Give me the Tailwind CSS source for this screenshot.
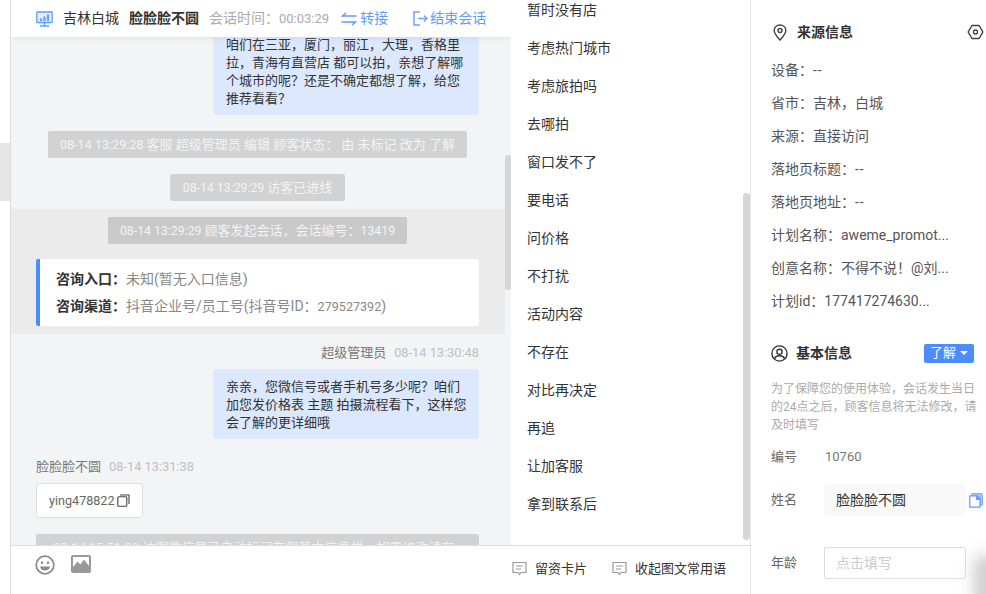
<!DOCTYPE html>
<html lang="zh">
<head>
  <meta charset="UTF-8">
  <title>会话</title>
  <script src="https://cdn.jsdelivr.net/npm/@tailwindcss/browser@4"></script>
</head>
<body class="overflow-hidden bg-white font-['Roboto','Noto_Sans_CJK_SC',sans-serif] text-[#333]">
  <div class="flex h-[594px] w-[986px] overflow-hidden">
    <!-- left sliver -->
    <div class="relative w-[11px] shrink-0 border-r border-[#ddd] bg-white">
      <div class="absolute left-0 top-[143px] h-[58px] w-[10px] bg-[#e6e6e6]"></div>
    </div>

    <!-- middle -->
    <div class="flex w-[740px] shrink-0 flex-col border-r border-[#e5e5e5]">
      <div class="flex h-[545px] min-h-0">
        <!-- chat -->
        <div class="relative w-[500px] shrink-0 overflow-hidden bg-[#f3f4f6]">
          <header class="relative z-10 flex h-[37px] items-center bg-white pl-[25px] text-[14px] shadow-[0_1px_6px_rgba(0,0,0,0.08)]">
            <svg class="mr-[10px] h-[16px] w-[17px]" viewBox="0 0 17 16" fill="none" stroke="#5f9bff" stroke-width="1.3">
              <rect x="0.8" y="1" width="15.4" height="10.5" rx="0.5" fill="#e6effe"/>
              <path d="M8.5 11.5V14.5M4 15H13" />
              <path d="M5 10V7.5M8.5 10V5.5M12 10V3.5" stroke-width="2.2"/>
            </svg>
            <span>吉林白城</span>
            <span class="ml-[10px] font-bold">脸脸脸不圆</span>
            <span class="ml-[10px] text-[#aaa]">会话时间：<span class="text-[13px]">00:03:29</span></span>
            <svg class="ml-[12px] h-[14px] w-[16px]" viewBox="0 0 16 14" fill="none" stroke="#5f9bff" stroke-width="1.4">
              <path d="M15.5 4H1.5L5 1M0.5 10H14.5L11 13"/>
            </svg>
            <span class="ml-[3px] text-[#5f9bff]">转接</span>
            <svg class="ml-[25px] h-[15px] w-[15px]" viewBox="0 0 15 15" fill="none" stroke="#6ea3ff" stroke-width="1.5">
              <path d="M7 1H1V14H7M5 7.5H14M11 4.5L14 7.5L11 10.5"/>
            </svg>
            <span class="ml-[2px] text-[#5f9bff]">结束会话</span>
          </header>

          <div class="absolute right-0 top-[155px] z-10 h-[135px] w-[6px] rounded bg-[#d6d6d6]"></div>

          <div class="pr-[6px] text-[13px] leading-[18px]">
            <div class="pl-[25px] pr-[26px]">
              <div class="-mt-[10px] ml-auto w-[266px] rounded-[4px] bg-[#dce8fe] pb-[7px] pl-[13px] pr-[12px] pt-[9px]">咱们在三亚，厦门，丽江，大理，香格里拉，青海有直营店 都可以拍，亲想了解哪个城市的呢？还是不确定都想了解，给您推荐看看？</div>
              <div class="mt-[16px] flex flex-col items-center gap-[16px]">
                <div class="flex h-[27px] w-[419px] items-center justify-center rounded-[2px] bg-[#d2d2d2] text-[#f3f3f3]"><span class="mr-[3px] text-[12.6px]">08-14 13:29:28</span>客服 超级管理员 编辑 顾客状态： 由 未标记 改为 了解</div>
                <div class="flex h-[27px] w-[175px] items-center justify-center rounded-[2px] bg-[#d2d2d2] text-[#f3f3f3]"><span class="mr-[3px] text-[12.3px]">08-14 13:29:29</span>访客已进线</div>
              </div>
            </div>

            <div class="mt-[8px] flex flex-col bg-[#ebebeb] pb-[8px] pl-[25px] pr-[26px] pt-[8px]">
              <div class="flex h-[27px] w-[299px] items-center justify-center self-center rounded-[2px] bg-[#c9c9c9] text-[#f3f3f3]"><span class="mr-[3px] text-[12.3px]">08-14 13:29:29</span>顾客发起会话，会话编号：<span class="text-[12.3px]">13419</span></div>
              <div class="mt-[15px] h-[67px] rounded-[2px] border-l-4 border-[#4d8cff] bg-white pl-[16px] pt-[7px] text-[14px] leading-[27px]">
                <div><span class="font-bold">咨询入口：</span><span class="text-[#888]">未知(暂无入口信息)</span></div>
                <div><span class="font-bold">咨询渠道：</span><span class="text-[#888]">抖音企业号/员工号(抖音号ID：<span class="text-[12.6px]">279527392</span>)</span></div>
              </div>
            </div>

            <div class="pl-[25px] pr-[26px]">
              <div class="mt-[10px] flex justify-end gap-[8px]">
                <span class="text-[#777]">超级管理员</span><span class="text-[12.8px] text-[#c0c0c0]">08-14 13:30:48</span>
              </div>
              <div class="mt-[7px] ml-auto w-[266px] rounded-[4px] bg-[#dce8fe] pb-[7px] pl-[13px] pr-[11px] pt-[9px]">亲亲，您微信号或者手机号多少呢？咱们加您发价格表 主题 拍摄流程看下，这样您会了解的更详细哦</div>
              <div class="mt-[19px] flex gap-[8px]">
                <span class="text-[#777]">脸脸脸不圆</span><span class="text-[12.8px] text-[#c0c0c0]">08-14 13:31:38</span>
              </div>
              <div class="mt-[7px] flex h-[35px] w-[107px] items-center rounded-[4px] border border-[#ddd] bg-white pl-[12px] text-[12.6px] text-[#666]">
                ying478822
                <svg class="ml-[2px] h-[13px] w-[13px]" viewBox="0 0 13 13" fill="none" stroke="#444" stroke-width="1.1">
                  <rect x="0.8" y="2.8" width="9" height="9.5" rx="1"/>
                  <path d="M3 1H12V10"/>
                </svg>
              </div>
              <div class="mt-[16px] rounded-[2px] bg-[#d2d2d2] px-[17px] py-[4.5px] text-[#f3f3f3]">08-14 15:51:00 访客微信号已自动标记在侧基本信息栏，如需修改请在基本信息栏修改</div>
            </div>
          </div>
        </div>

        <!-- quick replies -->
        <div class="relative flex-1 overflow-hidden bg-white pl-[16px] text-[14px] leading-[38px]">
          <div class="absolute right-0 top-[193px] h-[347px] w-[7px] rounded bg-[#d6d6d6]"></div>
          <ul class="-mt-[9px]">
            <li>暂时没有店</li>
            <li>考虑热门城市</li>
            <li>考虑旅拍吗</li>
            <li>去哪拍</li>
            <li>窗口发不了</li>
            <li>要电话</li>
            <li>问价格</li>
            <li>不打扰</li>
            <li>活动内容</li>
            <li>不存在</li>
            <li>对比再决定</li>
            <li>再追</li>
            <li>让加客服</li>
            <li>拿到联系后</li>
          </ul>
        </div>
      </div>

      <!-- toolbar -->
      <div class="flex h-[49px] items-start border-t border-[#ddd] bg-white pl-[24px] text-[13px]">
        <svg class="mt-[9px] h-[20px] w-[20px]" viewBox="0 0 20 20" fill="none" stroke="#888" stroke-width="1.7">
          <circle cx="10" cy="10" r="8.8"/>
          <circle cx="7" cy="7.8" r="1.3" fill="#888" stroke="none"/>
          <circle cx="13" cy="7.8" r="1.3" fill="#888" stroke="none"/>
          <path d="M5 11.5H15C14.5 14.2 12.5 15.5 10 15.5C7.5 15.5 5.5 14.2 5 11.5Z" fill="#888" stroke="none"/>
        </svg>
        <svg class="ml-[16px] mt-[9px] h-[18px] w-[20px]" viewBox="0 0 20 18">
          <rect width="20" height="18" rx="2" fill="#999"/>
          <rect x="2" y="2" width="16" height="13" fill="#fff"/>
          <path d="M2 12L6.5 6.5L9.5 9.5L13 4.5L18 11V16H2Z" fill="#999"/>
        </svg>
        <div class="ml-auto mr-[24px] mt-[13px] flex items-center">
          <svg class="h-[15px] w-[15px]" viewBox="0 0 15 15" fill="none" stroke="#999" stroke-width="1.2">
            <path d="M1 1.5H14V11.5H9L7.5 13.5L6 11.5H1Z"/><path d="M4 5H11M4 8H9"/>
          </svg>
          <span class="ml-[8px]">留资卡片</span>
          <svg class="ml-[25px] h-[15px] w-[15px]" viewBox="0 0 15 15" fill="none" stroke="#999" stroke-width="1.2">
            <path d="M1 1.5H14V11.5H9L7.5 13.5L6 11.5H1Z"/><path d="M4 5H11M4 8H9"/>
          </svg>
          <span class="ml-[8px]">收起图文常用语</span>
        </div>
      </div>
    </div>

    <!-- right panel -->
    <aside class="relative flex-1 overflow-hidden bg-white pl-[20px] text-[13px]">
      <div class="absolute -bottom-[12px] -right-[12px] h-[50px] w-[24px] bg-[#ccc] blur-[8px]"></div>
      <div class="mt-[22px] flex h-[20px] items-center">
        <svg class="ml-[2px] h-[17px] w-[14px]" viewBox="0 0 14 17" fill="none" stroke="#444" stroke-width="1.4">
          <path d="M7 16C4 12.5 1.2 9.8 1.2 6.5C1.2 3.2 3.8 1 7 1C10.2 1 12.8 3.2 12.8 6.5C12.8 9.8 10 12.5 7 16Z"/>
          <circle cx="7" cy="6.5" r="2"/>
        </svg>
        <span class="ml-[10px] text-[14px] font-bold">来源信息</span>
        <svg class="ml-auto mr-[2px] h-[16px] w-[17px]" viewBox="0 0 17 16" fill="none" stroke="#444" stroke-width="1.4">
          <path d="M5 1.5H12L15.8 8L12 14.5H5L1.2 8Z"/>
          <circle cx="8.5" cy="8" r="2"/>
        </svg>
      </div>
      <div class="mt-[12px] text-[14px] leading-[33px] text-[#555]">
        <div>设备：<span class="tracking-[1px]">--</span></div>
        <div>省市：吉林，白城</div>
        <div>来源：直接访问</div>
        <div>落地页标题：<span class="tracking-[1px]">--</span></div>
        <div>落地页地址：<span class="tracking-[1px]">--</span></div>
        <div>计划名称：aweme_promot...</div>
        <div>创意名称：不得不说！@刘...</div>
        <div>计划id：177417274630...</div>
      </div>

      <div class="mt-[25px] flex h-[20px] items-center">
        <svg class="h-[17px] w-[17px]" viewBox="0 0 17 17" fill="none" stroke="#333" stroke-width="1.4">
          <circle cx="8.5" cy="8.5" r="7.6"/>
          <circle cx="8.5" cy="6.8" r="2.6"/>
          <path d="M3.5 14C4 11.5 6 10.8 8.5 10.8C11 10.8 13 11.5 13.5 14"/>
        </svg>
        <span class="ml-[8px] text-[14px] font-bold">基本信息</span>
        <span class="ml-auto mr-[12px] flex h-[19px] w-[50px] items-center justify-center rounded-[2px] bg-[#4d8cff] text-[#fff]">了解<span class="ml-[4px] h-0 w-0 border-x-[4px] border-t-[4px] border-x-transparent border-t-white"></span></span>
      </div>
      <p class="mt-[17px] w-[208px] text-[12px] leading-[18px] text-[#aaa]">为了保障您的使用体验，会话发生当日的24点之后，顾客信息将无法修改，请及时填写</p>

      <div class="mt-[13px] flex h-[20px] items-center text-[#666]">
        <span class="w-[54px]">编号</span><span class="text-[#777]">10760</span>
      </div>
      <div class="mt-[17px] flex items-center">
        <span class="w-[53px] text-[#666]">姓名</span>
        <div class="flex h-[32px] w-[142px] items-center rounded-[2px] bg-[#f9f9f9] pl-[12px] text-[14px]">脸脸脸不圆</div>
        <svg class="ml-[3px] h-[15px] w-[14px]" viewBox="0 0 14 15" stroke="#5f9bff" stroke-width="1.2">
          <path d="M3 0.8H12.5L13.2 2V12H11V3H3Z" fill="#dce8fe"/>
          <path d="M0.8 2.8H8L11 6V14.2H0.8Z" fill="#fff"/>
          <path d="M7.5 3V6.5H11" fill="#5f9bff"/>
        </svg>
      </div>
      <div class="mt-[31px] flex items-center">
        <span class="w-[53px] text-[#666]">年龄</span>
        <div class="flex h-[32px] w-[142px] items-center rounded-[2px] border border-[#ddd] pl-[11px] text-[14px] text-[#ccc]">点击填写</div>
      </div>
    </aside>
  </div>
</body>
</html>
